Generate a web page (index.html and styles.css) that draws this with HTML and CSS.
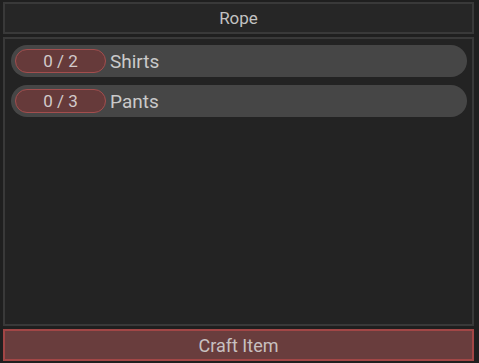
FILE: index.html
```html
<!DOCTYPE html>
<html lang="en">
<head>
  <meta charset="UTF-8">
  <title>Crafting</title>
  <link rel="stylesheet" href="styles.css">
</head>
<body>
  <div class="craft">
    <div class="title">Rope</div>
    <div class="ingredients">
      <div class="ingredient">
        <span class="count">0 / 2</span>
        <span class="name">Shirts</span>
      </div>
      <div class="ingredient">
        <span class="count">0 / 3</span>
        <span class="name">Pants</span>
      </div>
    </div>
    <button class="craft-btn">Craft Item</button>
  </div>
</body>
</html>
```

FILE: styles.css
```css
* {
  margin: 0;
  padding: 0;
  box-sizing: border-box;
}

body {
  background: #1f1f1f;
  font-family: Roboto, 'Liberation Sans', sans-serif;
  color: #c4c4c4;
  width: 479px;
  height: 363px;
  overflow: hidden;
}

.craft {
  display: flex;
  flex-direction: column;
  gap: 3px;
  height: 363px;
  padding: 2px 5px 2px 3px;
}

.title {
  height: 32px;
  background: #262626;
  border: 2px solid #393939;
  display: flex;
  align-items: center;
  justify-content: center;
  font-size: 17px;
  color: #c2c2c2;
}

.ingredients {
  flex: 1;
  background: #232323;
  border: 2px solid #393939;
  padding: 6px 5px 6px 6px;
  display: flex;
  flex-direction: column;
  gap: 8px;
}

.ingredient {
  height: 32px;
  border-radius: 16px;
  background: #464646;
  display: flex;
  align-items: center;
  padding-left: 4px;
  gap: 4px;
}

.count {
  width: 91px;
  height: 24px;
  border-radius: 12px;
  background: #663a3a;
  border: 1px solid #a34e4e;
  display: flex;
  align-items: center;
  justify-content: center;
  font-size: 17px;
  color: #d2caca;
}

.name {
  font-size: 19px;
  color: #cacaca;
}

.craft-btn {
  height: 32px;
  background: #693d3d;
  border: 2px solid #a24646;
  font-family: inherit;
  font-size: 18px;
  color: #c8c0c0;
}
```
